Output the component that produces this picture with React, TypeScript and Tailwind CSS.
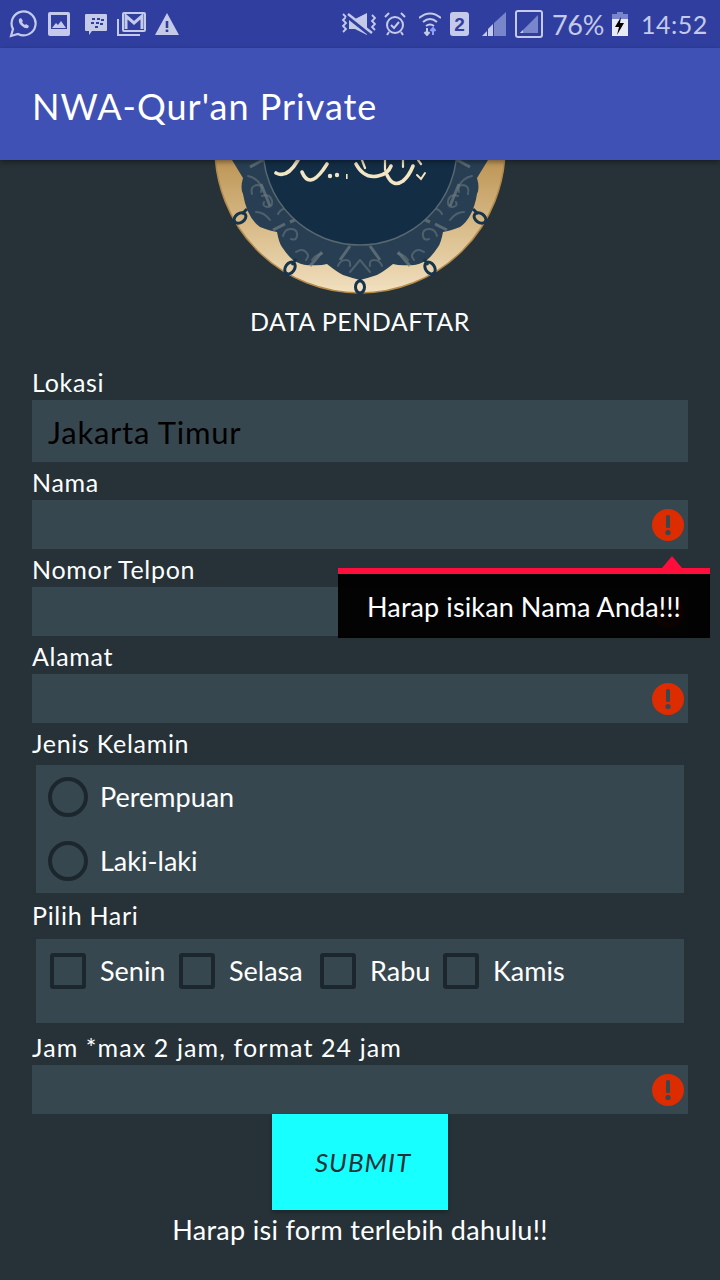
const font = "font-['Lato','Noto_Sans',sans-serif]"

function Label({ children, wide }: { children: string; wide?: boolean }) {
  return (
    <p className={`h-[38px] flex items-center pt-0.5 text-[25px] text-white leading-none pl-[32px] ${wide ? "tracking-[1.1px]" : "tracking-[0.7px]"}`}>
      {children}
    </p>
  )
}

function ErrorIcon() {
  return (
    <svg viewBox="0 0 32 32" className="w-8 h-8">
      <circle cx="16" cy="16" r="16" fill="#dd2c00" />
      <rect x="14" y="6" width="4" height="13" rx="1.5" fill="#39474f" />
      <circle cx="16" cy="23.5" r="2.6" fill="#39474f" />
    </svg>
  )
}

function Field({ error }: { error?: boolean }) {
  return (
    <div className="mx-8 h-[49px] bg-[#37474f] flex items-center justify-end pr-1">
      {error && <ErrorIcon />}
    </div>
  )
}

function RosetteHalf() {
  return (
    <g>
      <path
        d="M232 160 L243 178 Q240 188 243 194 Q247 218 260 227 Q270 231 277 232 Q279 243 282 247 Q288 256 293 260 Q302 266 310 265 Q320 266 327 264 Q337 272 343 275 Q352 278 360 280 V160 Z"
        fill="#283f53"
      />
      <g fill="none" stroke="#4e606c" strokeWidth="2" strokeLinecap="round">
        <path d="M248 176 q10 2 14 12 M252 194 q-2 -8 5 -9 q6 0 4 7 M262 196 q8 -3 10 5 q1 6 -5 6 q-5 -1 -3 -5" />
        <path d="M256 212 q8 0 14 8 M283 236 q2 -8 9 -7 q6 1 5 7 q-1 5 -6 3 M296 252 q6 -4 10 0 q4 4 0 8 M312 260 q4 -6 10 -6" />
        <path d="M278 214 q4 -7 11 -5 M338 266 q2 -6 8 -6 q5 0 4 6 M350 272 l10 -12" />
      </g>
      <g fill="none" stroke="#6e7c82" strokeWidth="3" opacity="0.7">
        <path d="M250 167 l13 -7 M270 206 l-9 -22 M285 224 l-12 6 M290 222 l14 -6 M322 252 l-12 14 M350 246 l-10 14" />
      </g>
      <path d="M247 209 L242 214 M296 259 L292 265" stroke="#16344d" strokeWidth="3" />
      <ellipse cx="240" cy="218" rx="6.5" ry="4.5" transform="rotate(-35 240 218)" fill="none" stroke="#16344d" strokeWidth="3" />
      <ellipse cx="290" cy="268" rx="6.5" ry="4.5" transform="rotate(-55 290 268)" fill="none" stroke="#16344d" strokeWidth="3" />
    </g>
  )
}

function Logo() {
  return (
    <svg viewBox="200 160 320 134" className="w-[320px] h-[134px] mx-auto block shrink-0">
      <defs>
        <linearGradient id="rim" gradientUnits="userSpaceOnUse" x1="0" y1="160" x2="0" y2="293">
          <stop offset="0" stopColor="#bd9556" />
          <stop offset="0.5" stopColor="#d8bb88" />
          <stop offset="1" stopColor="#f1e0c0" />
        </linearGradient>
      </defs>
      <circle cx="360" cy="148" r="145" fill="url(#rim)" stroke="#b48a4b" strokeWidth="1.5" />
      <RosetteHalf />
      <g transform="matrix(-1 0 0 1 720 0)">
        <RosetteHalf />
      </g>
      <path d="M360 279 V288" stroke="#16344d" strokeWidth="3" />
      <ellipse cx="360" cy="287" rx="4.5" ry="6" fill="#f1e0c0" stroke="#16344d" strokeWidth="3" />
      <circle cx="360" cy="148" r="97" fill="#132d45" stroke="#57686f" strokeWidth="1.5" />
      <g fill="none" stroke="#f3e6c4" strokeWidth="3.6" strokeLinecap="round">
        <path d="M276 173 q11 6 22 -13" />
        <path d="M302 172 q7 17 21 -2 l4 -6" />
        <path d="M356 164 q8 15 22 12 q10 -2 13 -10" />
        <path d="M387 175 q6 13 16 6 q6 -5 10 -15" />
        <path d="M385 160 v10 M403 160 v7 M418 160 l3 4 M362 160 l3 8" strokeWidth="2.2" />
        <path d="M417 175 l4 4 l4 -6" strokeWidth="2" />
      </g>
      <g fill="#f3e6c4">
        <circle cx="330" cy="176" r="2.2" />
        <circle cx="337" cy="175" r="2.2" />
        <rect x="346" y="174" width="1.6" height="5" />
      </g>
    </svg>
  )
}

function StatusBar() {
  const c = "#c5cae9"
  return (
    <div className="h-12 bg-[#303f9f] flex items-center justify-between pl-[9px] pr-[14px] shrink-0">
      <div className="flex items-center">
        <svg viewBox="0 0 28 28" className="w-7 h-7" fill="none" stroke={c} strokeWidth="2.2">
          <path d="M2 26 l2 -7 a12 12 0 1 1 5 5 z" />
          <path d="M10 9 q-1 4 3 7 q3 3 6 2 l1 -2 l-3 -2 l-1 1 q-2 -1 -3 -3 l1 -1 l-2 -3 z" fill={c} stroke="none" />
        </svg>
        <svg viewBox="0 0 22 24" className="w-[22px] h-6 ml-[11px]" fill={c}>
          <path fillRule="evenodd" d="M2 0 h18 a2 2 0 0 1 2 2 v20 a2 2 0 0 1 -2 2 h-18 a2 2 0 0 1 -2 -2 v-20 a2 2 0 0 1 2 -2 z M3 3 v14 h16 v-14 z" />
          <path d="M4 16 l4 -5 l2 2 l3 -4 l5 7 z" />
        </svg>
        <svg viewBox="0 0 24 24" className="w-6 h-6 ml-[14px]" fill={c}>
          <path d="M2 2 h20 a1 1 0 0 1 1 1 v15 a1 1 0 0 1 -1 1 h-14 l-3 4 v-4 h-3 a1 1 0 0 1 -1 -1 v-15 a1 1 0 0 1 1 -1 z" />
          <g fill="#303f9f">
            <rect x="8" y="6" width="3" height="2" /><rect x="13" y="6" width="3" height="2" /><rect x="7" y="10" width="3" height="2" /><rect x="12" y="10" width="3" height="2" /><rect x="17" y="7" width="3" height="2" /><rect x="16" y="11" width="3" height="2" /><rect x="11" y="14" width="3" height="2" />
          </g>
        </svg>
        <svg viewBox="0 0 29 24" className="w-[29px] h-6 ml-[9px]" fill="none" stroke={c} strokeWidth="2">
          <path d="M1 7 v16 h22" />
          <rect x="6" y="1" width="22" height="18" rx="1" />
          <path d="M9 17 v-13 l8 7 l8 -7 v13" strokeWidth="3" />
        </svg>
        <svg viewBox="0 0 24 22" className="w-6 h-[22px] ml-[9px]" fill={c}>
          <path fillRule="evenodd" d="M12 0 L24 22 H0 Z M10.7 8 h2.6 v7 h-2.6 z M10.7 16.5 h2.6 v2.6 h-2.6 z" />
        </svg>
      </div>
      <div className="flex items-center">
        <svg viewBox="0 0 36 24" className="w-9 h-6 mr-2" fill="none" stroke={c} strokeWidth="1.8">
          <path d="M3 2 l3 3 l-3 3 l3 3 l-3 3 l3 3 l-3 3 M32 3 l3 3 l-3 3 l3 3 l-3 3 l3 3" />
          <path d="M9 7 h6 l12 -6 v22 l-12 -6 h-6 z" fill={c} stroke="none" />
          <path d="M7 4 L31 23" stroke="#303f9f" strokeWidth="4" />
          <path d="M8 2 L32 21" stroke={c} strokeWidth="2.4" />
        </svg>
        <svg viewBox="0 0 22 24" className="w-[22px] h-6 mr-[13px]" fill="none" stroke={c} strokeWidth="2">
          <circle cx="11" cy="13" r="8" />
          <path d="M7 13 l3 3 l5 -6 M1 5 l4 -4 M21 5 l-4 -4 M5 20 l-2 3 M17 20 l2 3" />
        </svg>
        <svg viewBox="0 0 22 24" className="w-[22px] h-6 mr-[9px]" fill="none" stroke={c} strokeWidth="2">
          <path d="M0 6 q11 -9 22 0 M4 10 q7 -6 14 0 M7 14 q4 -3 8 0" />
          <path d="M8 16 v7 M5.5 20 l2.5 3 l2.5 -3" />
          <path d="M14 23 v-7 M11.5 19 l2.5 -3 l2.5 3" stroke="#8c9eff" />
        </svg>
        <div className="w-[19px] h-6 bg-[#c5cae9] rounded-[3px] text-[#303f9f] text-[19px] font-bold flex items-center justify-center leading-none mr-[13px] font-['Liberation_Sans',sans-serif]">2</div>
        <svg viewBox="0 0 24 24" className="w-6 h-6 mr-[9px]">
          <path d="M0 24 h5 v-5 z" fill="#c5cae9" />
          <path d="M6 24 v-7 l5 -5 v12 z" fill="#c5cae9" />
          <path d="M12 24 v-13 l12 -11 v24 z" fill="#7986cb" />
        </svg>
        <svg viewBox="0 0 28 28" className="w-7 h-7 mr-[9px]" fill="none">
          <rect x="1" y="1" width="26" height="26" rx="2" stroke="#c5cae9" strokeWidth="2" />
          <path d="M5 23 L23 5 V23 Z" fill="#7986cb" />
          <path d="M5 23 l3 -3 v3 z" fill="#c5cae9" />
        </svg>
        <span className="w-[52px] mr-2 text-[27px] leading-none text-[#c5cae9] tracking-[-0.3px] whitespace-nowrap">76%</span>
        <svg viewBox="0 0 16 24" className="w-4 h-6 mr-[13px]">
          <rect x="5" y="0" width="6" height="3" fill="#7986cb" />
          <rect x="0" y="2" width="16" height="5" fill="#7986cb" />
          <rect x="0" y="7" width="16" height="17" fill="#e8eaf6" />
          <path d="M9 5 L3 15 h4 l-2 8 L12 11 h-4 z" fill="#000" />
        </svg>
        <span className="w-[65px] text-[25px] leading-none text-[#c5cae9] tracking-[0.5px] whitespace-nowrap">14:52</span>
      </div>
    </div>
  )
}

export default function App() {
  return (
    <div className={`relative w-[720px] h-[1280px] overflow-hidden bg-[#263238] flex flex-col ${font}`}>
      <StatusBar />
      <div className="h-28 shrink-0 bg-[#3f51b5] flex items-center pl-8 pt-1 text-white text-[36px] tracking-[1px] shadow-[0_2px_5px_rgba(0,0,0,0.4)] z-10">
        NWA-Qur'an Private
      </div>
      <Logo />
      <p className="h-14 shrink-0 flex items-center justify-center text-[25px] tracking-[0.5px] text-white">DATA PENDAFTAR</p>
      <div className="mt-3">
        <Label>Lokasi</Label>
      </div>
      <div className="mx-8 h-[62px] bg-[#37474f] flex items-center pl-4 pt-0.5 text-[31px] tracking-[0.75px] text-black">Jakarta Timur</div>
      <Label>Nama</Label>
      <Field error />
      <Label>Nomor Telpon</Label>
      <Field error />
      <Label>Alamat</Label>
      <Field error />
      <Label>Jenis Kelamin</Label>
      <div className="mx-9 mt-1 h-[128px] bg-[#37474f] flex flex-col pt-3 gap-6 pl-3">
        {["Perempuan", "Laki-laki"].map((g) => (
          <div key={g} className="flex items-center gap-3 h-10">
            <div className="w-10 h-10 rounded-full border-[4px] border-[#1c272d]" />
            <span className="text-white text-[27px]">{g}</span>
          </div>
        ))}
      </div>
      <div className="h-[46px] flex items-center pl-8 text-[25px] text-white tracking-[0.7px]">Pilih Hari</div>
      <div className="mx-9 h-[84px] bg-[#37474f] flex items-start pt-[14px] pl-[14px]">
        {[
          ["Senin", "w-[129px]"],
          ["Selasa", "w-[141px]"],
          ["Rabu", "w-[123px]"],
          ["Kamis", "w-[130px]"],
        ].map(([d, w]) => (
          <div key={d} className={`flex items-center h-9 ${w}`}>
            <div className="w-9 h-9 shrink-0 rounded-[3px] border-[4px] border-[#1c272d]" />
            <span className="ml-[14px] text-white text-[27px]">{d}</span>
          </div>
        ))}
      </div>
      <div className="mt-1">
        <Label wide>Jam *max 2 jam, format 24 jam</Label>
      </div>
      <Field error />
      <div className="w-44 h-24 mx-auto bg-[#18ffff] flex items-center justify-center pl-1.5 text-[#263238] text-[26px] tracking-[1px] italic shrink-0 shadow-[0_2px_4px_rgba(0,0,0,0.3)]">SUBMIT</div>
      <p className="text-center text-white text-[27px] tracking-[0.3px]">Harap isi form terlebih dahulu!!</p>

      {/* validation tooltip */}
      <div className="absolute left-[338px] top-[556px] w-[372px]">
        <div className="ml-[324px] w-0 h-0 border-x-[10px] border-x-transparent border-b-[12px] border-b-[#ff0d3d]" />
        <div className="h-[6px] bg-[#ff0d3d]" />
        <div className="h-[64px] bg-[#000000f2] flex items-center justify-center pt-0.5 text-white text-[27px] tracking-[0.1px]">Harap isikan Nama Anda!!!</div>
      </div>
    </div>
  )
}
